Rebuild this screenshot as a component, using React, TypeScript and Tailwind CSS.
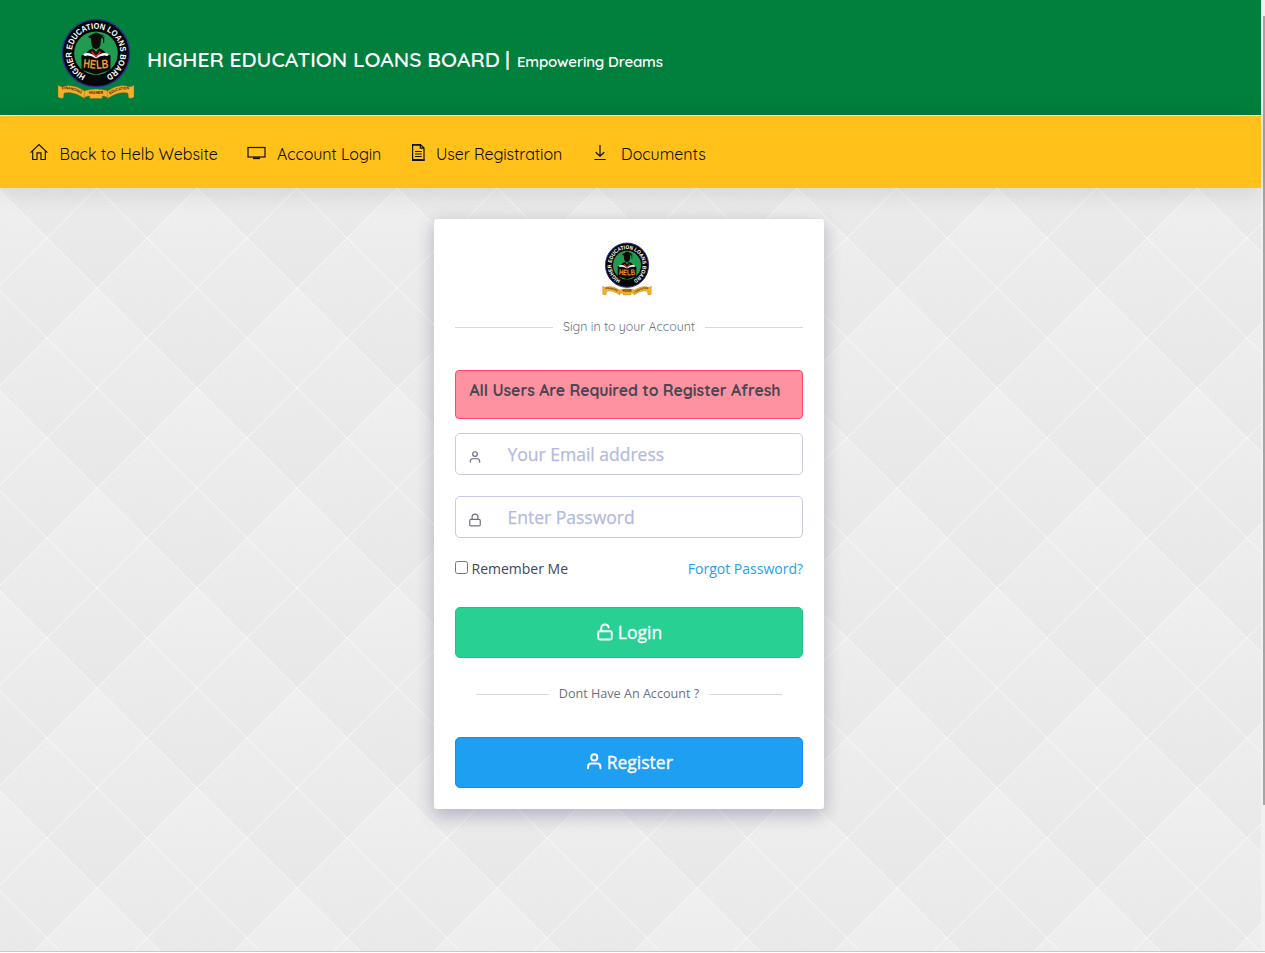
import React from "react";
import { Lock, LockOpen } from "lucide-react";

function Crest({ className, id }: { className: string; id: string }) {
  return (
    <svg viewBox="0 0 78 82" className={className} preserveAspectRatio="none" role="img">
      <defs>
        <path id={id} d="M28.8 57.4 A24.4 24.4 0 1 1 47.8 58" />
        <path id={`${id}-l`} d="M5 71.6 Q15 70 25.5 76.6" />
        <path id={`${id}-r`} d="M53 76.6 Q63 70 74 71.6" />
      </defs>
      <circle cx="39" cy="35.2" r="33.6" fill="#050608" stroke="#2b3190" strokeWidth="1.5" />
      <circle cx="39" cy="35.2" r="21.8" fill="#229a50" />
      <text fill="#fff" fontSize="8.4" fontWeight="700" fontFamily="Liberation Sans, sans-serif">
        <textPath href={`#${id}`} textLength="132" lengthAdjust="spacingAndGlyphs">HIGHER EDUCATION LOANS BOARD</textPath>
      </text>
      <path d="M31 18.5 L39 14.5 L47.5 18 L45 20.5 Q39 18.5 33 20.5 Z M34 20 Q39 18.6 44 20 L43.6 26 Q43 30.5 39 31 Q35 30.5 34.4 26 Z M46 18 V25 H47.2 V18 Z" fill="#0b0d0b" />
      <path d="M29 37 Q30 31.5 36 30.5 L39 34 L42 30.5 Q48 31.5 49 37 Z" fill="#0b0d0b" />
      <path d="M24.5 37.5 Q32 33.5 39 39 Q46 33.5 53.5 37.5 V52 L39 56.5 L24.5 52 Z" fill="#090b09" />
      <path d="M26 36.2 Q32 33 39 38.6 Q46 33 52 36.2 L50.5 38 Q45 36.5 39 40.4 Q33 36.5 27.5 38 Z" fill="#fff" />
      <path d="M34.5 33.5 L39 38.6 L43.5 33.5" fill="none" stroke="#d9231f" strokeWidth="1.6" />
      <g fill="#f39a2d" fontSize="12.5" fontWeight="700" fontFamily="Liberation Sans, sans-serif">
        <text x="26" y="49.6" textLength="12.6" lengthAdjust="spacingAndGlyphs" transform="rotate(6 26 49.6)">HE</text>
        <text x="39.4" y="51" textLength="12.4" lengthAdjust="spacingAndGlyphs" transform="rotate(-5 39.4 51)">LB</text>
      </g>
      <g fill="#f3ae2b" stroke="#8a5c12" strokeWidth="0.35">
        <path d="M1 67 Q4 70 8 68 Q17 66 29 74 L27.5 80.5 Q16 72.5 7 75 L6.5 80 Q3 81 1 79 Z" />
        <path d="M77 67 Q74 70 70 68 Q61 66 49 74 L50.5 80.5 Q62 72.5 71 75 L71.5 80 Q75 81 77 79 Z" />
        <path d="M28 72.5 Q39 69.5 50 72.5 L51 79.5 Q47 77.5 45.5 78 L45 80.5 H33 L32.5 78 Q31 77.5 27 79.5 Z" />
      </g>
      <g fill="#33240a" fontSize="3.9" fontWeight="700" fontFamily="Liberation Sans, sans-serif">
        <text><textPath href={`#${id}-l`} textLength="20" lengthAdjust="spacingAndGlyphs">FINANCING</textPath></text>
        <text><textPath href={`#${id}-r`} textLength="20" lengthAdjust="spacingAndGlyphs">EDUCATION</textPath></text>
        <text x="32" y="76" textLength="14" lengthAdjust="spacingAndGlyphs">HIGHER</text>
      </g>
    </svg>
  );
}

function DiamondBackdrop() {
  return (
    <svg className="absolute inset-0 h-full w-full" aria-hidden="true">
      <defs>
        <linearGradient id="top" x1="0" y1="0" x2="0" y2="1"><stop stopColor="#f0f0f0" /><stop offset="1" stopColor="#ebebeb" /></linearGradient>
        <linearGradient id="mid" x1="0" y1="0" x2="0" y2="1"><stop stopColor="#eeeeee" /><stop offset="1" stopColor="#e9e9e9" /></linearGradient>
        <linearGradient id="low" x1="0" y1="0" x2="0" y2="1"><stop stopColor="#ececec" /><stop offset="1" stopColor="#e8e8e8" /></linearGradient>
        <pattern id="diamonds" width="200" height="200" patternUnits="userSpaceOnUse" patternTransform="translate(97 100)">
          {[[0, 0], [200, 0], [100, -100], [100, 100], [0, -200], [200, -200]].map(([x, y]) => (
            <g key={`${x}/${y}`} transform={`translate(${x} ${y})`}>
              <path d="M0 0 L50 50 L0 100 L-50 50 Z" fill="url(#top)" />
              <path d="M-50 50 L0 100 L-50 150 L-100 100 Z" fill="url(#mid)" />
              <path d="M50 50 L100 100 L50 150 L0 100 Z" fill="url(#mid)" />
              <path d="M0 100 L50 150 L0 200 L-50 150 Z" fill="url(#low)" />
            </g>
          ))}
        </pattern>
        <pattern id="seams" width="100" height="100" patternUnits="userSpaceOnUse" patternTransform="translate(97 100)">
          <path d="M-1 -1 L101 101 M101 -1 L-1 101" stroke="#fff" strokeOpacity="0.75" strokeWidth="0.9" />
        </pattern>
        <filter id="paper" x="0" y="0" width="100%" height="100%">
          <feTurbulence type="fractalNoise" baseFrequency="0.7" numOctaves="2" seed="4" />
          <feColorMatrix values="0 0 0 0 0.5  0 0 0 0 0.5  0 0 0 0 0.5  0.1 0 0 0 -0.042" />
        </filter>
      </defs>
      <rect width="100%" height="100%" fill="#ebebeb" />
      <rect width="100%" height="100%" fill="url(#diamonds)" />
      <rect width="100%" height="100%" filter="url(#paper)" />
      <rect width="100%" height="100%" fill="url(#seams)" />
    </svg>
  );
}

function PersonIcon({ className }: { className: string }) {
  return (
    <svg viewBox="0 0 24 24" className={className} fill="none" stroke="currentColor" strokeLinecap="round" strokeLinejoin="round">
      <path d="M20 21v-2a4 4 0 0 0-4-4H8a4 4 0 0 0-4 4v2" />
      <circle cx="12" cy="7" r="4" />
    </svg>
  );
}

function HomeIcon() {
  return (
    <svg className="h-[18px] w-[18px]" viewBox="0 0 18 18" fill="none" stroke="#111" strokeWidth="1.15">
      <path d="M.6 9.7 L9 1.5 L17.4 9.7 M2.7 8.2 V16.5 H7 V9.8 H11 V16.5 H15.3 V8.2" />
    </svg>
  );
}

function ScreenIcon() {
  return (
    <svg className="h-[18px] w-[19px]" viewBox="0 0 19 18" fill="none" stroke="#111" strokeWidth="1.2">
      <rect x="1" y="4.5" width="17" height="9.5" />
      <path d="M6 15.2 H13" strokeWidth="1.9" />
    </svg>
  );
}

function FileIcon() {
  return (
    <svg className="h-[18px] w-[14px]" viewBox="0 0 14 18" fill="none" stroke="#111" strokeWidth="1.2">
      <path d="M1.6 1.5 H9.4 L13 5 V17 H1.6 Z M9.3 1.5 V5.2 H13 M4 8.5 H10.7 M4 11 H10.7 M4 13.5 H10.7" />
      <path d="M1 1.8 H9.6 M1 17 H13.6" strokeWidth="1.8" />
    </svg>
  );
}

function DownloadIcon() {
  return (
    <svg className="h-[18px] w-[14px]" viewBox="0 0 14 18" fill="none" stroke="#111" strokeWidth="1.2">
      <path d="M7 2 V13 M2.7 9.3 L7 13.3 L11.3 9.3 M1.3 16.5 H12.7" />
    </svg>
  );
}

function NavItem({ icon, label, iconBox, textBox }: { icon: React.ReactNode; label: string; iconBox: string; textBox: string }) {
  return (
    <a href="#" className="flex items-center">
      <span className={`mb-[2px] flex shrink-0 ${iconBox}`}>{icon}</span>
      <span className={`mt-[3px] shrink-0 whitespace-nowrap text-[16px] leading-6 text-[#0d0b05] ${textBox}`}>{label}</span>
    </a>
  );
}

function Divider({ children, className }: { children: React.ReactNode; className: string }) {
  return (
    <div className={`flex h-5 items-center ${className}`}>
      <span className="h-px flex-1 bg-[#d8d8dc]" />
      {children}
      <span className="h-px flex-1 bg-[#d8d8dc]" />
    </div>
  );
}

export default function App() {
  return (
    <div className="flex h-[953px] w-[1265px] flex-col overflow-hidden bg-white font-['Quicksand','Lato',sans-serif]">
      <div className="flex h-[951px]">
        <div className="flex w-[1261px] flex-col">
          <header className="flex h-[116px] shrink-0 border-b border-[#fdfdf5] bg-[#00803c] pl-[57px] pt-[18px] text-white">
            <Crest id="ring-large" className="h-[82px] w-[78px]" />
            <h1 className="ml-[12px] mt-[25px] flex h-8 items-baseline whitespace-nowrap text-[21px] font-semibold leading-8">
              <span className="w-[358px]">HIGHER EDUCATION LOANS BOARD</span>
              <span className="w-[12px]">|</span>
              <span className="text-[15px] tracking-[-0.2px]">Empowering Dreams</span>
            </h1>
          </header>
          <nav className="relative z-10 flex h-[72px] shrink-0 items-center bg-[#ffc11a] pl-[30px] pt-[1px] shadow-[0_2px_26px_1px_rgba(0,0,0,0.12)]">
            <NavItem icon={<HomeIcon />} label="Back to Helb Website" iconBox="w-[29.5px]" textBox="w-[187.5px]" />
            <NavItem icon={<ScreenIcon />} label="Account Login" iconBox="w-[30px]" textBox="w-[134px] tracking-[-0.1px]" />
            <NavItem icon={<FileIcon />} label="User Registration" iconBox="w-[25px]" textBox="w-[157px] tracking-[-0.1px]" />
            <NavItem icon={<DownloadIcon />} label="Documents" iconBox="w-[28px]" textBox="w-[90px]" />
          </nav>
          <main className="relative flex flex-1 justify-center pr-[3px] pt-[31px]">
            <DiamondBackdrop />
            <section className="relative flex h-[590px] w-[390px] flex-col rounded-[3px] bg-white px-[21px] pt-[22.5px] shadow-[0_7px_16px_0_rgba(62,57,107,0.22),0_3px_20px_0_rgba(62,57,107,0.13)]">
              <Crest id="ring-small" className="mr-[4px] h-[54px] w-[50px] self-center" />
              <Divider className="mt-[21.5px]">
                <span className="w-[152px] whitespace-nowrap text-center text-[12.35px] leading-5 text-[#6b6f82]">Sign in to your Account</span>
              </Divider>
              <div className="mt-[33px] h-[49px] rounded-[4px] border border-[#ff4961] bg-[#ff92a0] px-[13.5px] pt-[7px] text-[15.75px] font-bold leading-6 tracking-[-0.01px] text-[#464855]">
                <span className="whitespace-nowrap">All Users Are Required to Register Afresh</span>
              </div>
              <label className="mt-[14px] flex h-[42px] items-center rounded-[5px] border border-[#c8cbe8] pl-[12px] font-['Open_Sans',sans-serif]">
                <PersonIcon className="mt-[5px] h-[14px] w-[14px] stroke-2 text-[#6b6f82]" />
                <input type="email" placeholder="Your Email address" className="ml-[25.5px] w-[270px] text-[17.5px] outline-none placeholder:text-[#b3bbde] placeholder:[-webkit-text-stroke:0.25px]" />
              </label>
              <label className="mt-[21px] flex h-[42px] items-center rounded-[5px] border border-[#c8cbe8] pl-[12px] font-['Open_Sans',sans-serif]">
                <Lock className="mt-[5px] h-[14px] w-[14px] text-[#6b6f82]" strokeWidth={2} />
                <input type="password" placeholder="Enter Password" className="ml-[25.5px] w-[270px] text-[17.5px] outline-none placeholder:text-[#b3bbde] placeholder:[-webkit-text-stroke:0.25px]" />
              </label>
              <div className="mt-[20px] flex h-[21px] items-center font-['Open_Sans',sans-serif] text-[14px] leading-[21px]">
                <input type="checkbox" id="remember" className="mb-[2px] h-[13px] w-[13px]" />
                <label htmlFor="remember" className="ml-[3.5px] text-[#404668]">Remember Me</label>
                <a href="#" className="ml-auto text-[#1e9ff2]">Forgot Password?</a>
              </div>
              <button className="mt-[28px] flex h-[51px] shrink-0 items-center justify-center gap-[4px] rounded-[5px] border border-[#23c088] bg-[#28d094] font-['Open_Sans',sans-serif] text-[17.5px] text-white [-webkit-text-stroke:0.35px]">
                <LockOpen className="mb-[2px] h-[18px] w-[18px]" strokeWidth={2.5} />
                Login
              </button>
              <Divider className="mx-[21px] mt-[26px]">
                <span className="w-[160px] whitespace-nowrap text-center font-['Open_Sans',sans-serif] text-[12.6px] text-[#6b6f82]">Dont Have An Account ?</span>
              </Divider>
              <button className="mt-[33px] flex h-[51px] shrink-0 items-center justify-center gap-[3px] rounded-[5px] border border-[#148cf0] bg-[#1e9ff2] font-['Open_Sans',sans-serif] text-[17.5px] text-white [-webkit-text-stroke:0.35px]">
                <PersonIcon className="mb-[2px] h-[18.5px] w-[18.5px] stroke-[2.5]" />
                Register
              </button>
            </section>
          </main>
        </div>
        <div className="flex w-[4px] flex-col items-end bg-[#f1f1f1] pt-[16px]">
          <div className="h-[789px] w-[2px] bg-[#a5a5a5]" />
        </div>
      </div>
      <div className="h-px bg-[#c9cac5]" />
    </div>
  );
}
